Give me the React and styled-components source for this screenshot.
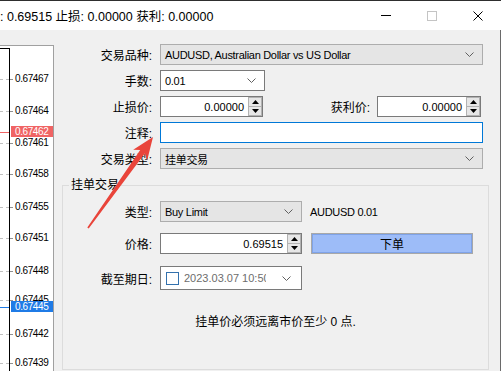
import React from "react";
import styled, { createGlobalStyle } from "styled-components";

const ticks = [
  { price: "0.67467", y: 79 },
  { price: "0.67464", y: 110.5 },
  { price: "0.67461", y: 142.5 },
  { price: "0.67458", y: 174 },
  { price: "0.67455", y: 206.5 },
  { price: "0.67451", y: 238 },
  { price: "0.67448", y: 270.5 },
  { price: "0.67445", y: 300 },
  { price: "0.67442", y: 334 },
  { price: "0.67439", y: 363 },
];

const markers = [
  { price: "0.67462", y: 131.5, color: "#f06464" },
  { price: "0.67445", y: 306.5, color: "#1f7be6" },
];

// page y of the chart's inner top edge
const CHART_TOP = 46;
const PLOT_TOP = 49;

function Chevron() {
  return (
    <svg width="9" height="5" viewBox="0 0 9 5">
      <polyline points="0.5,0.5 4.5,4.5 8.5,0.5" fill="none" stroke="#606060" strokeWidth="1"/>
    </svg>
  );
}

function SpinBox({w, value}) {
  return (
    <Spin $w={w}>
      <SpinValue>{value}</SpinValue>
      <SpinButtons>
        <SpinHalf>
          <svg width="7" height="4" viewBox="0 0 7 4"><polygon points="3.5,0 7,4 0,4" fill="#000"/></svg>
        </SpinHalf>
        <SpinHalf>
          <svg width="7" height="4" viewBox="0 0 7 4"><polygon points="0,0 7,0 3.5,4" fill="#000"/></svg>
        </SpinHalf>
      </SpinButtons>
    </Spin>
  );
}

function App() {
  return (
    <Window>
      <GlobalStyle/>
      <TitleBar>
        <TitleText>: 0.69515 止损: 0.00000 获利: 0.00000</TitleText>
        <WinButton>
          <svg width="10" height="1" viewBox="0 0 10 1"><rect width="10" height="1" fill="#000"/></svg>
        </WinButton>
        <WinButton>
          <svg width="10" height="10" viewBox="0 0 10 10">
            <rect x="0.5" y="0.5" width="9" height="9" fill="none" stroke="#c4c4c4"/>
          </svg>
        </WinButton>
        <WinButton>
          <svg width="10" height="10" viewBox="0 0 10 10">
            <path d="M0.5 0.5 L9.5 9.5 M9.5 0.5 L0.5 9.5" stroke="#000" strokeWidth="1"/>
          </svg>
        </WinButton>
      </TitleBar>

      <Body>
        <Chart>
          <Plot>
            {ticks.map(t => (
              <GridLine key={t.price + t.y} style={{top: Math.round(t.y) - PLOT_TOP}}/>
            ))}
            {markers.map(m => (
              <PriceLine key={m.price} $color={m.color} style={{top: Math.round(m.y) - PLOT_TOP}}/>
            ))}
          </Plot>
          <Scale>
            {ticks.map(t => (
              <React.Fragment key={t.price + t.y}>
                <Tick style={{top: Math.round(t.y) - CHART_TOP}}/>
                <ScaleLabel style={{top: t.y - CHART_TOP - 6}}>{t.price}</ScaleLabel>
              </React.Fragment>
            ))}
            {markers.map(m => (
              <Marker key={m.price} $color={m.color} style={{top: m.y - CHART_TOP - 5.5}}>
                {m.price}
              </Marker>
            ))}
          </Scale>
        </Chart>

        <Form>
          <Row $pr={6}>
            <Label>交易品种:</Label>
            <Combo>
              <ComboText>AUDUSD, Australian Dollar vs US Dollar</ComboText>
              <Chevron/>
            </Combo>
          </Row>
          <Row $pr={6} $mt={5}>
            <Label>手数:</Label>
            <Combo $white $w={105}>
              <ComboText>0.01</ComboText>
              <Chevron/>
            </Combo>
          </Row>
          <Row $pr={6} $mt={5}>
            <Label>止损价:</Label>
            <Field>
              <SpinBox w={103} value="0.00000"/>
              <SideLabel>获利价:</SideLabel>
              <SpinBox w={104} value="0.00000"/>
              <Gap $w={2}/>
            </Field>
          </Row>
          <Row $pr={6} $mt={5}>
            <Label>注释:</Label>
            <TextInput/>
          </Row>
          <Row $pr={6} $mt={5}>
            <Label>交易类型:</Label>
            <Combo>
              <ComboText>挂单交易</ComboText>
              <Chevron/>
            </Combo>
          </Row>

          <GroupBox>
            <Legend>挂单交易</Legend>
            <Row $label={89} $mt={8}>
              <Label>类型:</Label>
              <Field>
                <Combo $w={142}>
                  <ComboText>Buy Limit</ComboText>
                  <Chevron/>
                </Combo>
                <Info>AUDUSD 0.01</Info>
              </Field>
            </Row>
            <Row $label={89} $mt={11}>
              <Label>价格:</Label>
              <Field>
                <SpinBox w={142} value="0.69515"/>
                <PlaceButton>下单</PlaceButton>
              </Field>
            </Row>
            <Row $label={89} $mt={12} $h={24}>
              <Label>截至期日:</Label>
              <DatePicker>
                <CheckBox/>
                <DateText>2023.03.07 10:50</DateText>
                <Chevron/>
              </DatePicker>
            </Row>
            <Message>挂单价必须远离市价至少 0 点.</Message>
          </GroupBox>
        </Form>
      </Body>

      <Overlay width="501" height="371" viewBox="0 0 501 371">
        <polygon
          points="153,137 147.2,160.2 144.8,153.4 88.7,228.5 87.3,227.5 140.2,150.1 133.2,149.8"
          fill="#e9443a"
        />
      </Overlay>
    </Window>
  );
}

const GlobalStyle = createGlobalStyle`
  html, body {
    margin: 0;
    padding: 0;
    background: #f0f0f0;
  }
  body {
    font-family: "Liberation Sans", "Noto Sans CJK SC", sans-serif;
    font-size: 11px;
    color: #000;
  }
  * {
    box-sizing: border-box;
  }
`;

const Window = styled.div`
  position: relative;
  width: 501px;
  height: 371px;
  overflow: hidden;
  background: #f0f0f0;
`;

const TitleBar = styled.div`
  display: flex;
  align-items: center;
  height: 30px;
  background: #fff;
  border-top: 1px solid #2e2e2e;
`;

const TitleText = styled.div`
  flex: 1;
  font-size: 12.5px;
  white-space: nowrap;
  overflow: hidden;
`;

const WinButton = styled.div`
  width: 46px;
  height: 100%;
  display: flex;
  align-items: center;
  justify-content: center;
`;

const Body = styled.div`
  display: flex;
  height: 341px;
  border-right: 1px solid #6a6a6a;
`;

const Chart = styled.div`
  position: relative;
  display: flex;
  width: 54px;
  margin-top: 15px;
  background: #fff;
  border-top: 1px solid #a0a0a0;
  border-right: 1px solid #a0a0a0;
  overflow: hidden;
`;

const Plot = styled.div`
  position: relative;
  width: 10px;
  margin-top: 2px;
  border-top: 1px solid #000;
  border-right: 1px solid #000;
`;

const GridLine = styled.div`
  position: absolute;
  left: 0;
  width: 9px;
  border-top: 1px dashed #c0c0c0;
`;

const PriceLine = styled.div`
  position: absolute;
  left: 0;
  width: 9px;
  border-top: 1px solid ${p => p.$color};
`;

const Scale = styled.div`
  position: relative;
  flex: 1;
`;

const Tick = styled.div`
  position: absolute;
  left: 0;
  width: 3px;
  border-top: 1px solid #909090;
`;

const ScaleLabel = styled.div`
  position: absolute;
  left: 5px;
  font-size: 10px;
  line-height: 12px;
  letter-spacing: -0.4px;
`;

const Marker = styled.div`
  position: absolute;
  left: 1px;
  right: 0;
  height: 11px;
  padding-left: 4px;
  font-size: 10px;
  line-height: 11px;
  letter-spacing: -0.4px;
  color: #fff;
  background: ${p => p.$color};
`;

const Form = styled.div`
  flex: 1;
  display: flex;
  flex-direction: column;
  min-width: 0;
  margin: 0 11px 0 8px;
  padding-top: 14px;
`;

const Row = styled.div`
  display: grid;
  grid-template-columns: ${p => p.$label || 90}px 1fr;
  column-gap: 8px;
  align-items: center;
  height: ${p => p.$h || 21}px;
  margin-top: ${p => p.$mt || 0}px;
  padding-right: ${p => p.$pr || 0}px;
`;

const Label = styled.div`
  font-size: 12px;
  text-align: right;
  white-space: nowrap;
`;

const Field = styled.div`
  display: flex;
  align-items: center;
  height: 100%;
`;

const Gap = styled.div`
  width: ${p => p.$w}px;
`;

const Combo = styled.div`
  display: flex;
  align-items: center;
  justify-content: space-between;
  height: 100%;
  width: ${p => (p.$w ? `${p.$w}px` : "auto")};
  padding: 0 8px 0 4px;
  background: ${p => (p.$white ? "#fff" : "#e5e5e5")};
  border: 1px solid ${p => (p.$white ? "#7a7a7a" : "#adadad")};
`;

const ComboText = styled.span`
  letter-spacing: -0.3px;
  white-space: nowrap;
  font-size: 11px;
`;

const TextInput = styled.div`
  height: 100%;
  background: #fff;
  border: 1px solid #0078d7;
`;

const Spin = styled.div`
  display: flex;
  width: ${p => p.$w}px;
  height: 100%;
  background: #fff;
  border: 1px solid #7a7a7a;
`;

const SpinValue = styled.div`
  flex: 1;
  display: flex;
  align-items: center;
  justify-content: flex-end;
  padding-right: 4px;
`;

const SpinButtons = styled.div`
  display: flex;
  flex-direction: column;
  width: 14px;
`;

const SpinHalf = styled.div`
  flex: 1;
  display: flex;
  align-items: center;
  justify-content: center;
  background: #e6e6e6;
  border: 1px solid #b2b2b2;

  & + & {
    border-top: none;
  }
`;

const SideLabel = styled.div`
  flex: 1;
  padding-right: 7px;
  font-size: 12px;
  text-align: right;
  white-space: nowrap;
`;

const GroupBox = styled.fieldset`
  flex: 1;
  min-width: 0;
  margin: 8px 0 1px;
  padding: 0;
  border: 1px solid #dcdcdc;
`;

const Legend = styled.legend`
  margin-left: 6px;
  padding: 0 2px;
  font-size: 12px;
  line-height: 16px;
`;

const Info = styled.span`
  margin-left: 8px;
  letter-spacing: -0.3px;
`;

const PlaceButton = styled.div`
  display: flex;
  align-items: center;
  justify-content: center;
  width: 162px;
  height: 100%;
  margin-left: 9px;
  font-size: 12px;
  background: #9dbcf8;
  border: 1px solid #a8a8a8;
  box-shadow: inset 0 0 0 1px #7fa3e8;
`;

const DatePicker = styled.div`
  display: flex;
  align-items: center;
  width: 142px;
  height: 100%;
  padding: 0 10px 0 5px;
  background: #fff;
  border: 1px solid #7a7a7a;
`;

const CheckBox = styled.div`
  flex: none;
  width: 13px;
  height: 13px;
  margin-right: 5px;
  border: 1px solid #3371ad;
  background: #fff;
`;

const DateText = styled.div`
  width: 82px;
  margin-right: 16px;
  overflow: hidden;
  white-space: nowrap;
  color: #6d6d6d;
`;

const Message = styled.div`
  margin-top: 24px;
  font-size: 12px;
  line-height: 16px;
  text-align: center;
`;

const Overlay = styled.svg`
  position: absolute;
  top: 0;
  left: 0;
  pointer-events: none;
`;

export default App;
